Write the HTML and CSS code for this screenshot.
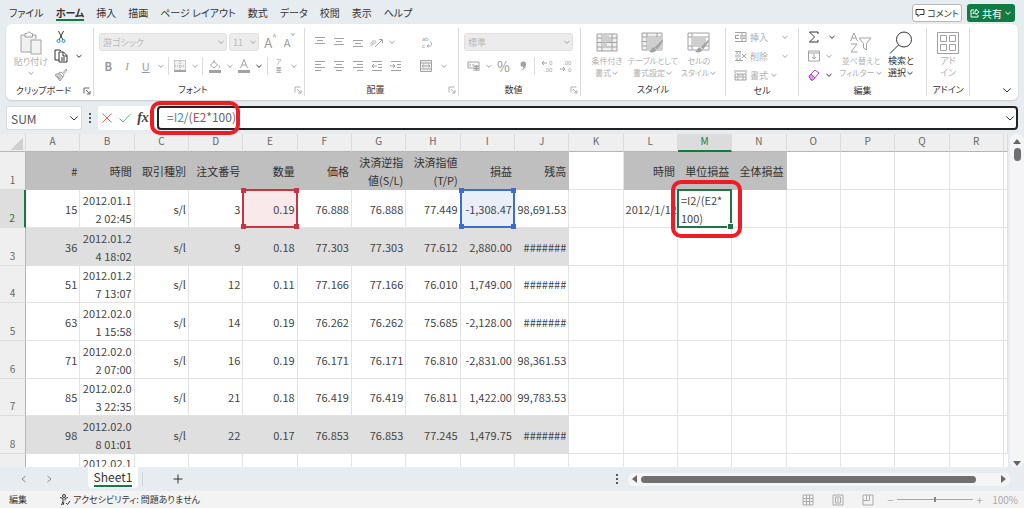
FILE: index.html
```html
<!DOCTYPE html>
<html lang="ja">
<head>
    <meta charset="UTF-8">
    <meta name="viewport" content="width=device-width, initial-scale=1.0">
    <title>Sheet1</title>
    <link rel="stylesheet" href="styles.css">
</head>
<body>
    <!-- 共通アイコン -->
    <svg class="defs" width="0" height="0" aria-hidden="true">
        <symbol id="chev" viewBox="0 0 8 8"><path vector-effect="non-scaling-stroke" d="M1.5 3l2.5 2.3L6.500 3"/></symbol>
        <symbol id="launcher" viewBox="0 0 8 8"><path d="M1 6.500V1h5.500M3 3l4 4M7 4v3H4"/></symbol>
        <symbol id="grid-icon" viewBox="0 0 22 20"><path class="pale" d="M1 1h20v17H1z"/><path d="M1 1h20v17H1zM1 5h20M1 9.500h20M1 14h20M6 1v17M16 1v17"/></symbol>
        <symbol id="brush" viewBox="0 0 14 14"><path class="solid" d="M13 1L6 8l2 2 5-7zM5 8c-2 0-2 3-4 4 2 1 6 1 6-2z"/></symbol>
    </svg>

    <header class="tabs">
        <nav class="tab-list">
            <a href="#">ファイル</a>
            <a href="#" class="active">ホーム</a>
            <a href="#">挿入</a>
            <a href="#">描画</a>
            <a href="#">ページ レイアウト</a>
            <a href="#">数式</a>
            <a href="#">データ</a>
            <a href="#">校閲</a>
            <a href="#">表示</a>
            <a href="#">ヘルプ</a>
        </nav>
        <div class="tab-actions">
            <button class="comment-btn"><svg width="10" height="10" viewBox="0 0 10 10"><path d="M1 1.500h8v5H5L3 8.500v-2H1z"/></svg>コメント</button>
            <button class="share-btn"><svg width="10" height="10" viewBox="0 0 10 10"><path d="M4 2H1v7h7V7M3 6c0-2 1-3 3-3V1l3 3-3 2.500V5C5 5 4 5 3 6z"/></svg>共有<svg width="8" height="8"><use href="#chev"/></svg></button>
        </div>
    </header>

    <section class="ribbon">
        <div class="group g-clip">
            <div class="group-body">
                <button class="big-btn off">
                    <svg width="24" height="24" viewBox="0 0 24 24"><path class="pale" d="M2 4h15v17H2z"/><path d="M6 4H2v17h10M13 4h4v4M6 2.500h2c0-2 4-2 4 0h1.500V6H6z"/><path class="paper" d="M12 9h10v14H12z"/></svg>
                    <span>貼り付け</span>
                    <svg width="8" height="8"><use href="#chev"/></svg>
                </button>
                <div class="stack">
                    <div class="line"><button class="icon-btn" aria-label="切り取り"><svg width="12" height="14" viewBox="0 0 12 14"><path d="M3.500 1L8 10M8.500 1L4 10"/><circle class="blue" cx="3.500" cy="11" r="1.500"/><circle class="blue" cx="8.500" cy="11" r="1.500"/></svg></button></div>
                    <div class="line"><button class="icon-btn" aria-label="コピー"><svg width="14" height="14" viewBox="0 0 14 14"><path d="M5 11H1V1h5l1 1M5 3h4.500L13 6.500V13H5zM9 3v4h4M7 9h4M7 11h4"/></svg></button><button class="chev-btn wide" aria-label="コピーのオプション"><svg width="8" height="8"><use href="#chev"/></svg></button></div>
                    <div class="line"><button class="icon-btn off" aria-label="書式のコピー"><svg width="14" height="14" viewBox="0 0 14 14"><path class="mid" d="M1 7l4-2 4 4-3 4z"/><path d="M5 5l2-1 3 3-1 2M8.500 5.500L12 1l1 1-3.500 4.500M1 7l4-2 4 4-3 4zM3 8l3 3"/></svg></button></div>
                </div>
            </div>
            <div class="group-label">クリップボード<svg width="8" height="8"><use href="#launcher"/></svg></div>
        </div>

        <div class="group g-font off">
            <div class="group-body rows">
                <div class="line">
                    <div class="combo combo-font"><select aria-label="フォント"><option>游ゴシック</option></select><svg width="8" height="8"><use href="#chev"/></svg></div>
                    <div class="combo combo-size"><select aria-label="フォント サイズ"><option>11</option></select><svg width="8" height="8"><use href="#chev"/></svg></div>
                    <button class="icon-btn letter-big">A<sup>^</sup></button>
                    <button class="icon-btn letter">A<sup>ˇ</sup></button>
                </div>
                <div class="line">
                    <button class="icon-btn letter"><b>B</b></button>
                    <button class="icon-btn letter serif"><i>I</i></button>
                    <button class="icon-btn letter"><u>U</u></button>
                    <button class="chev-btn" aria-label="下線"><svg width="8" height="8"><use href="#chev"/></svg></button>
                    <span class="sep"></span>
                    <button class="icon-btn" aria-label="罫線"><svg width="12" height="12" viewBox="0 0 12 12"><path class="pale" d="M0 0h12v11H0z"/><path class="dash" d="M.5.5h11v10M.5.5v10M6 1v10M1 6h10"/><path class="strong" d="M0 11h12"/></svg></button>
                    <button class="chev-btn" aria-label="罫線の種類"><svg width="8" height="8"><use href="#chev"/></svg></button>
                    <span class="sep"></span>
                    <button class="icon-btn" aria-label="塗りつぶしの色"><svg width="14" height="14" viewBox="0 0 14 14"><path d="M6 1v3M2.500 6L6 2.500 9.500 6 6 9zM10.500 6c2 2 1 3 0 3"/><path class="solid" d="M1 11h12v3H1z"/></svg></button>
                    <button class="chev-btn" aria-label="塗りつぶし"><svg width="8" height="8"><use href="#chev"/></svg></button>
                    <button class="icon-btn" aria-label="フォントの色"><svg width="14" height="14" viewBox="0 0 14 14"><path d="M3.500 9L7 .5 10.500 9M5 6h4"/><path class="solid" d="M1 11h12v3H1z"/></svg></button>
                    <button class="chev-btn on" aria-label="フォントの色の選択"><svg width="8" height="8"><use href="#chev"/></svg></button>
                    <span class="sep"></span>
                    <button class="icon-btn ruby"><span>ア</span><span>亜</span></button>
                    <button class="chev-btn" aria-label="ふりがな"><svg width="8" height="8"><use href="#chev"/></svg></button>
                </div>
            </div>
            <div class="group-label">フォント<svg width="8" height="8"><use href="#launcher"/></svg></div>
        </div>

        <div class="group g-align off">
            <div class="group-body">
                <div class="rows">
                    <div class="line">
                        <button class="icon-btn" aria-label="上揃え"><svg width="12" height="12" viewBox="0 0 12 12"><path d="M1 1.500h10M3 4.500h6M1 7.500h10"/></svg></button>
                        <button class="icon-btn" aria-label="上下中央揃え"><svg width="12" height="12" viewBox="0 0 12 12"><path d="M1 2.500h10M3 5.500h6M1 8.500h10"/></svg></button>
                        <button class="icon-btn" aria-label="下揃え"><svg width="12" height="12" viewBox="0 0 12 12"><path d="M1 4.500h10M3 7.500h6M1 10.500h10"/></svg></button>
                        <button class="icon-btn" aria-label="方向"><svg width="14" height="12" viewBox="0 0 14 12"><text x="0" y="8" transform="rotate(-40 4 7)">ab</text><path d="M5 11l7-7M9 3.500h3.500V7"/></svg></button>
                        <button class="chev-btn" aria-label="方向の選択"><svg width="8" height="8"><use href="#chev"/></svg></button>
                    </div>
                    <div class="line">
                        <button class="icon-btn" aria-label="左揃え"><svg width="12" height="12" viewBox="0 0 12 12"><path d="M1 1.500h10M1 4.500h6M1 7.500h10M1 10.500h6"/></svg></button>
                        <button class="icon-btn" aria-label="中央揃え"><svg width="12" height="12" viewBox="0 0 12 12"><path d="M1 1.500h10M3 4.500h6M1 7.500h10M3 10.500h6"/></svg></button>
                        <button class="icon-btn" aria-label="右揃え"><svg width="12" height="12" viewBox="0 0 12 12"><path d="M1 1.500h10M5 4.500h6M1 7.500h10M5 10.500h6"/></svg></button>
                        <button class="icon-btn" aria-label="インデントを減らす"><svg width="12" height="12" viewBox="0 0 12 12"><path d="M1 1.500h10M7 4.500h4M7 7.500h4M1 10.500h10M1 6h5M3 4L1 6l2 2"/></svg></button>
                        <button class="icon-btn" aria-label="インデントを増やす"><svg width="12" height="12" viewBox="0 0 12 12"><path d="M1 1.500h10M7 4.500h4M7 7.500h4M1 10.500h10M0 6h5M3 4l2 2-2 2"/></svg></button>
                    </div>
                </div>
                <span class="sep tall"></span>
                <div class="rows">
                    <div class="line"><button class="icon-btn wrap" aria-label="折り返して全体を表示する"><svg width="14" height="14" viewBox="0 0 14 14"><text x="3" y="6">ab</text><text x="3" y="13">c</text><path d="M11 7c2 0 2 4 0 4H8M9.500 9.500L8 11l1.500 1.500"/></svg></button></div>
                    <div class="line"><button class="icon-btn" aria-label="セルを結合"><svg width="12" height="12" viewBox="0 0 12 12"><path class="pale" d="M.5.5h11v11H.5z"/><path d="M.5.5h11v11H.5zM1 3h10M1 9h10M2 6h8M3.500 4.500L2 6l1.500 1.500M8.500 4.500L10 6 8.500 7.500"/></svg></button><button class="chev-btn wide" aria-label="結合の選択"><svg width="8" height="8"><use href="#chev"/></svg></button></div>
                </div>
            </div>
            <div class="group-label">配置<svg width="8" height="8"><use href="#launcher"/></svg></div>
        </div>

        <div class="group g-num off">
            <div class="group-body rows">
                <div class="line">
                    <div class="combo combo-num"><select aria-label="数値の書式"><option>標準</option></select><svg width="8" height="8"><use href="#chev"/></svg></div>
                </div>
                <div class="line">
                    <button class="icon-btn" aria-label="通貨"><svg width="14" height="12" viewBox="0 0 14 12"><path d="M6 8H1V2h11v3M3 3.500v3M5 5h2"/><path class="mid" d="M6 5h7v6H6z"/><path d="M7 6.500h5M7 8.500h5M9.500 5v6"/></svg></button>
                    <button class="chev-btn" aria-label="通貨の選択"><svg width="8" height="8"><use href="#chev"/></svg></button>
                    <button class="icon-btn percent">%</button>
                    <button class="icon-btn comma" aria-label="桁区切り"><svg width="8" height="12" viewBox="0 0 8 12"><path class="solid" d="M4 1.500c3 0 3 2 3 3 0 3-2 5-4 6l-.5-.5c1.500-1 2-2 2-3C2 7 1.500 5.500 1.500 4S3 1.500 4 1.500z"/></svg></button>
                    <span class="sep"></span>
                    <button class="icon-btn" aria-label="小数点以下の表示桁数を増やす"><svg width="14" height="14" viewBox="0 0 14 14"><text x="9" y="6">0</text><text x="4" y="13">.00</text><path d="M2 4h5M4 2L2 4l2 2"/></svg></button>
                    <button class="icon-btn" aria-label="小数点以下の表示桁数を減らす"><svg width="14" height="14" viewBox="0 0 14 14"><text x="4" y="6">.00</text><text x="9" y="13">0</text><path d="M1 10h5M4 8l2 2-2 2"/></svg></button>
                </div>
            </div>
            <div class="group-label">数値<svg width="8" height="8"><use href="#launcher"/></svg></div>
        </div>

        <div class="group g-style off">
            <div class="group-body">
                <button class="big-btn">
                    <svg width="22" height="20" viewBox="0 0 22 20"><use href="#grid-icon" width="22" height="20"/><path class="mid" d="M6 1h7v4H6zM6 9.500h5V14H6zM6 5h9v4H6z"/></svg>
                    <span>条件付き</span><span>書式<svg width="8" height="8"><use href="#chev"/></svg></span>
                </button>
                <button class="big-btn">
                    <svg width="24" height="22" viewBox="0 0 24 22"><use href="#grid-icon" width="22" height="20"/><path class="mid" d="M6 5h15v13H6z"/><use href="#brush" x="7" y="6" width="16" height="16"/></svg>
                    <span>テーブルとして</span><span>書式設定<svg width="8" height="8"><use href="#chev"/></svg></span>
                </button>
                <button class="big-btn">
                    <svg width="24" height="22" viewBox="0 0 24 22"><path d="M1 1h21v17H1zM1 5h21M5 1v17M1 14h21"/><path class="mid" d="M5 5h14v9H5z"/><use href="#brush" x="7" y="6" width="16" height="16"/></svg>
                    <span>セルの</span><span>スタイル<svg width="8" height="8"><use href="#chev"/></svg></span>
                </button>
            </div>
            <div class="group-label">スタイル</div>
        </div>

        <div class="group g-cell off">
            <div class="group-body stack">
                <button class="row-btn"><svg width="14" height="12" viewBox="0 0 14 12"><path d="M1 1.500h11v9H1M1 4.500h4M1 7.500h4M8 1v9M12 4.500H6M12 7.500H6M3 4L1 6l2 2"/><path class="mid" d="M6 4.500h6v3H6z"/></svg><span>挿入</span><svg class="end" width="8" height="8"><use href="#chev"/></svg></button>
                <button class="row-btn"><svg width="14" height="12" viewBox="0 0 14 12"><path d="M1 1.500h6M1 10.500h8M3 1v3M6 1v3M3 8v3M6 8v3M8 4l4 4M12 4L8 8"/><path class="mid" d="M1 4.500h6v3H1z"/></svg><span>削除</span><svg class="end" width="8" height="8"><use href="#chev"/></svg></button>
                <button class="row-btn"><svg width="14" height="12" viewBox="0 0 14 12"><path d="M1 1v3M12 1v3M2 2h9M1 5h11v6H1zM4 5v6M9 5v6M1 8h11"/><path class="mid" d="M4 6h5v3H4z"/></svg><span>書式</span><svg width="8" height="8"><use href="#chev"/></svg></button>
            </div>
            <div class="group-label">セル</div>
        </div>

        <div class="group g-edit">
            <div class="group-body">
                <div class="stack">
                    <div class="line"><button class="icon-btn" aria-label="合計"><svg width="12" height="12" viewBox="0 0 12 12"><path d="M10 3V1H1.500l5 5-5 5H10V9"/></svg></button><button class="chev-btn wide" aria-label="合計の選択"><svg width="8" height="8"><use href="#chev"/></svg></button></div>
                    <div class="line off"><button class="icon-btn" aria-label="フィル"><svg width="12" height="12" viewBox="0 0 12 12"><path d="M.5 1h11v10H.5zM1 3h10M6 4v5M4 7l2 2 2-2"/></svg></button><button class="chev-btn" aria-label="フィルの選択"><svg width="8" height="8"><use href="#chev"/></svg></button></div>
                    <div class="line"><button class="icon-btn" aria-label="クリア"><svg width="12" height="12" viewBox="0 0 12 12"><path class="purple" d="M1 7l6-6 4 3-6 7H3z"/><path class="purple-fill" d="M1 7l2-2 4 4-2 2H3z"/></svg></button><button class="chev-btn" aria-label="クリアの選択"><svg width="8" height="8"><use href="#chev"/></svg></button></div>
                </div>
                <button class="big-btn off">
                    <svg width="24" height="22" viewBox="0 0 24 22"><path d="M1.500 9L5 1l3.500 8M3 6h4M2 12h6l-6 8h6.500M10 6h12l-4.500 5.500V18l-3-2v-4.500z"/></svg>
                    <span>並べ替えと</span><span>フィルター<svg width="8" height="8"><use href="#chev"/></svg></span>
                </button>
                <button class="big-btn find-btn">
                    <svg width="24" height="24" viewBox="0 0 24 24"><circle cx="15" cy="8.500" r="7.500"/><path d="M9.500 14L1 22.500"/></svg>
                    <span>検索と</span><span>選択<svg width="8" height="8"><use href="#chev"/></svg></span>
                </button>
            </div>
            <div class="group-label">編集</div>
        </div>

        <div class="group g-addin">
            <div class="group-body">
                <button class="big-btn off">
                    <svg width="22" height="22" viewBox="0 0 22 22"><path d="M.5.5h21v21H.5zM3.500 3.500h6v6h-6zM12.500 3.500h6v6h-6zM3.500 12.500h6v6h-6zM12.500 12.500h6v6h-6z"/></svg>
                    <span>アド</span><span>イン</span>
                </button>
            </div>
            <div class="group-label">アドイン</div>
        </div>
        <button class="collapse-btn" aria-label="リボンを折りたたむ"><svg width="12" height="12"><use href="#chev"/></svg></button>
    </section>

    <section class="formula-bar">
        <div class="name-box">
            <input type="text" value="SUM" aria-label="名前ボックス">
            <svg width="12" height="12"><use href="#chev"/></svg>
        </div>
        <span class="dots"></span>
        <div class="formula-tools">
            <button aria-label="キャンセル"><svg width="12" height="12" viewBox="0 0 12 12"><path class="red" d="M1.500 1.500l9 9M10.500 1.500l-9 9"/></svg></button>
            <button aria-label="入力"><svg width="14" height="12" viewBox="0 0 14 12"><path class="green" d="M1.500 6.500L5 10l7.500-8"/></svg></button>
            <button class="fx">fx</button>
        </div>
        <div class="formula-wrap">
            <div class="formula" contenteditable="true" role="textbox" aria-label="数式バー" spellcheck="false">=<span class="ref-blue">I2</span>/(<span class="ref-red">E2</span>*100)</div>
            <svg class="expand" width="12" height="12"><use href="#chev"/></svg>
            <span class="mark mark-formula"></span>
        </div>
    </section>

    <main class="sheet">
        <div class="grid-wrap">
            <table class="grid">
                <colgroup><col class="col-head"><col span="18"><col class="col-rest"></colgroup>
                <thead>
                    <tr><th class="corner"></th><th>A</th><th>B</th><th>C</th><th>D</th><th>E</th><th>F</th><th>G</th><th>H</th><th>I</th><th>J</th><th>K</th><th>L</th><th class="current">M</th><th>N</th><th>O</th><th>P</th><th>Q</th><th>R</th><th></th></tr>
                </thead>
                <tbody>
                    <tr class="titles"><th>1</th><td>#</td><td>時間</td><td>取引種別</td><td>注文番号</td><td>数量</td><td>価格</td><td>決済逆指<br>値(S/L)</td><td>決済指値<br>(T/P)</td><td>損益</td><td>残高</td><td></td><td>時間</td><td>単位損益</td><td>全体損益</td><td></td><td></td><td></td><td></td><td></td></tr>
                    <tr><th class="current">2</th><td>15</td><td>2012.01.12 02:45</td><td>s/l</td><td>3</td><td class="pick pick-red">0.19<i></i><i></i><i></i><i></i></td><td>76.888</td><td>76.888</td><td>77.449</td><td class="pick pick-blue">-1,308.47<i></i><i></i><i></i><i></i></td><td>98,691.53</td><td></td><td class="date">2012/1/12</td><td class="editing">=I2/(E2*<br>100)<span class="mark mark-cell"></span></td><td></td><td></td><td></td><td></td><td></td><td></td></tr>
                    <tr class="band"><th>3</th><td>36</td><td>2012.01.24 18:02</td><td>s/l</td><td>9</td><td>0.18</td><td>77.303</td><td>77.303</td><td>77.612</td><td>2,880.00</td><td>#######</td><td></td><td></td><td></td><td></td><td></td><td></td><td></td><td></td><td></td></tr>
                    <tr><th>4</th><td>51</td><td>2012.01.27 13:07</td><td>s/l</td><td>12</td><td>0.11</td><td>77.166</td><td>77.166</td><td>76.010</td><td>1,749.00</td><td>#######</td><td></td><td></td><td></td><td></td><td></td><td></td><td></td><td></td><td></td></tr>
                    <tr><th>5</th><td>63</td><td>2012.02.01 15:58</td><td>s/l</td><td>14</td><td>0.19</td><td>76.262</td><td>76.262</td><td>75.685</td><td>-2,128.00</td><td>#######</td><td></td><td></td><td></td><td></td><td></td><td></td><td></td><td></td><td></td></tr>
                    <tr><th>6</th><td>71</td><td>2012.02.02 07:00</td><td>s/l</td><td>16</td><td>0.19</td><td>76.171</td><td>76.171</td><td>76.810</td><td>-2,831.00</td><td>98,361.53</td><td></td><td></td><td></td><td></td><td></td><td></td><td></td><td></td><td></td></tr>
                    <tr><th>7</th><td>85</td><td>2012.02.03 22:35</td><td>s/l</td><td>21</td><td>0.18</td><td>76.419</td><td>76.419</td><td>76.811</td><td>1,422.00</td><td>99,783.53</td><td></td><td></td><td></td><td></td><td></td><td></td><td></td><td></td><td></td></tr>
                    <tr class="band"><th>8</th><td>98</td><td>2012.02.08 01:01</td><td>s/l</td><td>22</td><td>0.17</td><td>76.853</td><td>76.853</td><td>77.245</td><td>1,479.75</td><td>#######</td><td></td><td></td><td></td><td></td><td></td><td></td><td></td><td></td><td></td></tr>
                    <tr><th></th><td></td><td>2012.02.1</td><td></td><td></td><td></td><td></td><td></td><td></td><td></td><td></td><td></td><td></td><td></td><td></td><td></td><td></td><td></td><td></td></tr>
                </tbody>
            </table>
        </div>
        <div class="v-scroll">
            <span class="arrow up"></span>
            <span class="v-thumb"></span>
            <span class="arrow down"></span>
        </div>
    </main>

    <footer>
        <div class="sheet-bar">
            <div class="sheet-nav">
                <button aria-label="前のシート"><svg width="8" height="8" viewBox="0 0 8 8"><path d="M5.500 1L2 4l3.500 3"/></svg></button>
                <button aria-label="次のシート"><svg width="8" height="8" viewBox="0 0 8 8"><path d="M2.500 1L6 4 2.500 7"/></svg></button>
            </div>
            <button class="sheet-tab"><span>Sheet1</span></button>
            <span class="tab-sep"></span>
            <button class="add-sheet" aria-label="新しいシート"><svg width="10" height="10" viewBox="0 0 10 10"><path d="M5 .5v9M.5 5h9"/></svg></button>
            <div class="h-area">
                <span class="dots"></span>
                <div class="h-scroll">
                    <span class="arrow left"></span>
                    <span class="h-track"><span class="h-thumb"></span></span>
                    <span class="arrow right"></span>
                </div>
            </div>
        </div>
        <div class="status">
            <span class="mode">編集</span>
            <span class="access"><svg width="12" height="12" viewBox="0 0 12 12"><circle cx="5" cy="2" r="1.500"/><path d="M1 3.500l3 1v3L2.500 11M9 3.500l-3 1v2M5 8l-1 3M7 9l1.500 1.500L11 7"/></svg>アクセシビリティ: 問題ありません</span>
            <div class="views">
                <button aria-label="標準"><svg width="12" height="12" viewBox="0 0 12 12"><path d="M1 1h10v10H1zM1 4.500h10M1 7.500h10M4.500 1v10M7.500 1v10"/></svg></button>
                <button aria-label="ページ レイアウト"><svg width="12" height="12" viewBox="0 0 12 12"><path d="M1 1h10v10H1zM3.500 3h5v6h-5zM5 5h2M5 7h2"/></svg></button>
                <button aria-label="改ページ プレビュー"><svg width="12" height="12" viewBox="0 0 12 12"><path d="M1 1h10v10H1zM1 6.500h6.500V1M4.500 1v5"/></svg></button>
            </div>
            <div class="zoom">
                <button aria-label="縮小">−</button>
                <input type="range" min="0" max="200" value="100" aria-label="ズーム">
                <button aria-label="拡大">+</button>
                <span class="percent-text">100%</span>
            </div>
        </div>
    </footer>
</body>
</html>
```
FILE: styles.css
```css
* {
    box-sizing: border-box;
}
body {
    margin: 0;
    height: 100vh;
    display: flex;
    flex-direction: column;
    overflow: hidden;
    background: #e7ecf0;
    color: #333;
    font-family: "Noto Sans CJK JP", sans-serif;
    font-size: 10px;
    font-feature-settings: "palt";
}
button {
    display: flex;
    align-items: center;
    justify-content: center;
    padding: 0;
    border: none;
    background: none;
    color: inherit;
    font: inherit;
    font-feature-settings: inherit;
}
svg {
    flex: none;
    overflow: visible;
    fill: none;
    stroke: currentColor;
}
svg text {
    fill: currentColor;
    stroke: none;
    font-family: "Liberation Sans", sans-serif;
    font-size: 6px;
}
.defs {
    position: absolute;
}
.pale { fill: #f0f0f0; stroke: none; }
.mid { fill: #cfcfcf; stroke: none; }
.solid { fill: currentColor; stroke: none; }
.paper { fill: #f3f3f3; }
.strong { stroke-width: 2; }
.dash { stroke-dasharray: 1 1; }
.blue { stroke: #2f8fd0; }
.red { stroke: #e8665c; }
.green { stroke: #5cb874; }
.purple { stroke: #b146c2; }
.purple-fill { fill: #d9a0e2; stroke: #b146c2; }
.off {
    color: #b0b0b0;
}
.off svg {
    color: #a2a2a2;
}
.off .on svg {
    color: #333;
}

/* タブ */
.tabs {
    display: flex;
    justify-content: space-between;
    height: 24px;
    padding: 0 9px;
}
.tab-list {
    display: flex;
    gap: 12px;
    padding-top: 5px;
}
.tab-list a {
    height: 16px;
    line-height: 16px;
    color: #333;
    text-decoration: none;
    white-space: nowrap;
}
.tab-list .active {
    font-weight: bold;
    border-bottom: 2px solid #107c41;
}
.tab-actions {
    display: flex;
    gap: 5px;
    padding-top: 4px;
}
.tab-actions button {
    height: 18px;
    gap: 2px;
    border-radius: 3px;
}
.comment-btn {
    width: 50px;
    background: #fff;
    border: 1px solid #b8b8b8;
    font-size: 9px;
}
.share-btn {
    width: 48px;
    background: #107c41;
    color: #fff;
}

/* リボン */
.ribbon {
    display: flex;
    height: 76px;
    margin: 0 6px;
    padding: 4px 0;
    background: #fff;
    border-radius: 6px;
    box-shadow: 0 1px 2px #c8ccd0;
    font-size: 9px;
}
.group {
    display: flex;
    flex-direction: column;
    flex: none;
    border-right: 1px solid #dadada;
}
.g-clip { width: 88px; }
.g-font { width: 211px; }
.g-align { width: 154px; }
.g-num { width: 122px; }
.g-style { width: 145px; }
.g-cell { width: 73px; }
.g-edit { width: 128px; }
.g-addin { width: 43px; }
.group-body {
    flex: 1;
    display: flex;
    padding: 0 5px;
}
.group-label {
    position: relative;
    height: 13px;
    line-height: 13px;
    text-align: center;
    color: #333;
}
.g-clip .group-label,
.g-font .group-label,
.g-align .group-label,
.g-num .group-label {
    padding-right: 12px;
}
.group-label svg {
    position: absolute;
    right: 2px;
    top: 3px;
    color: #666;
}
.off .group-label svg {
    color: #b0b0b0;
}
.rows {
    display: flex;
    flex-direction: column;
    padding-top: 4px;
    gap: 4px;
}
.group-body.rows {
    padding-top: 4px;
}
.line {
    display: flex;
    align-items: center;
}
.rows .line {
    height: 20px;
}
.stack {
    display: flex;
    flex-direction: column;
    gap: 1px;
}
.stack .line,
.row-btn {
    height: 18px;
}
.icon-btn {
    width: 19px;
    height: 18px;
}
.chev-btn {
    width: 11px;
    height: 18px;
}
.chev-btn.wide {
    width: 18px;
}
.big-btn {
    flex-direction: column;
    justify-content: flex-start;
    padding-top: 3px;
    line-height: 12px;
    white-space: nowrap;
}
.big-btn > svg:first-child {
    height: 24px;
}
.big-btn span {
    display: flex;
    align-items: center;
}
.g-clip .big-btn {
    width: 42px;
}
.g-clip .big-btn span {
    line-height: 14px;
}
.g-style .group-body {
    justify-content: space-between;
}
.g-style .big-btn,
.g-edit .off.big-btn {
    font-size: 8px;
}
.g-style .big-btn {
    width: 42px;
}
.g-edit .stack {
    flex: 1;
}
.g-edit .big-btn {
    width: 40px;
}
.g-addin .big-btn {
    width: 100%;
}
.sep {
    width: 1px;
    height: 18px;
    margin: 0 2px;
    background: #dadada;
}
.sep.tall {
    height: 46px;
    margin: 4px 5px 0 6px;
}
.letter {
    font-size: 11px;
}
.letter-big {
    font-size: 13px;
}
.icon-btn sup {
    font-size: 8px;
    line-height: 8px;
    align-self: flex-start;
}
.serif {
    font-family: "Liberation Serif", serif;
}
.percent {
    font-size: 14px;
}
.g-font .icon-btn,
.g-align .icon-btn,
.g-num .icon-btn {
    color: #999;
}
.ruby {
    flex-direction: column;
    font-size: 6px;
    line-height: 8px;
}
.combo {
    position: relative;
    height: 18px;
    margin-right: 2px;
}
.combo select {
    width: 100%;
    height: 18px;
    padding: 0 3px;
    appearance: none;
    background: #ececec;
    border: 1px solid #e0e0e0;
    border-radius: 3px;
    color: #b8b8b8;
    font: inherit;
    font-feature-settings: inherit;
}
.combo svg {
    position: absolute;
    right: 2px;
    top: 5px;
}
.combo-font { width: 128px; }
.combo-size { width: 30px; }
.combo-num { width: 111px; }
.row-btn {
    gap: 2px;
    justify-content: flex-start;
    padding-left: 3px;
}
.row-btn .end {
    margin-left: auto;
    margin-right: 4px;
}
.collapse-btn {
    margin-left: auto;
    padding-right: 5px;
    align-self: flex-end;
}

/* 数式バー */
.formula-bar {
    display: flex;
    height: 24px;
    margin: 6px 6px 4px;
}
.name-box {
    position: relative;
    width: 76px;
}
.name-box input {
    width: 100%;
    height: 24px;
    padding: 0 4px;
    border: 1px solid #d8dcdf;
    border-radius: 3px;
    color: #555;
    font: inherit;
    font-size: 12px;
}
.name-box svg {
    position: absolute;
    right: 2px;
    top: 6px;
}
.dots {
    width: 2px;
    height: 10px;
    margin: 7px 7px;
    background: repeating-linear-gradient(#555 0 2px, transparent 2px 4px);
}
.formula-tools {
    display: flex;
    width: 59px;
    background: #fff;
    border-radius: 3px 0 0 3px;
}
.formula-tools button {
    width: 18px;
}
.formula-tools .fx {
    font: italic bold 14px "Liberation Serif", serif;
    color: #444;
}
.formula-wrap {
    position: relative;
    flex: 1;
}
.formula {
    height: 24px;
    padding-left: 8px;
    background: #fff;
    border: 2px solid #222;
    border-radius: 4px;
    color: #666;
    font-size: 12px;
    line-height: 18px;
    outline: none;
}
.ref-blue { color: #3a8fd0; }
.ref-red { color: #c8464f; }
.expand {
    position: absolute;
    right: 2px;
    top: 6px;
}
.mark {
    position: absolute;
    z-index: 5;
    border: 4px solid #ee1c25;
    border-radius: 10px;
    pointer-events: none;
}
.mark-formula {
    left: -7px;
    top: -5px;
    width: 90px;
    height: 34px;
}
.mark-cell {
    inset: -10px -11px -11px -7px;
}

/* シート */
.sheet {
    display: flex;
    flex: 1;
    min-height: 0;
}
.grid-wrap {
    flex: 1;
    overflow: hidden;
    background: #fff;
}
.grid {
    width: 100%;
    table-layout: fixed;
    border-collapse: separate;
    border-spacing: 0;
    color: #444;
    font-size: 11px;
    font-feature-settings: normal;
    line-height: 18px;
}
.col-head { width: 26px; }
.col-rest { width: 4px; }
.grid th {
    padding: 0;
    background: #efefef;
    color: #666;
    font-size: 10px;
    font-weight: normal;
}
.grid thead th {
    height: 18px;
    line-height: 14px;
    vertical-align: top;
    border-right: 1px solid #dcdcdc;
    border-bottom: 1px solid #b5b5b5;
}
.grid thead .current {
    background: #dcdcdc;
    border-bottom: 2px solid #107c41;
    color: #107c41;
}
.grid .corner {
    background: linear-gradient(135deg, transparent 50%, #d0d0d0 50%) 11px 4px / 12px 12px no-repeat #efefef;
}
.grid tbody tr {
    height: 38px;
}
.grid tbody tr:nth-child(3n+4) {
    height: 37px;
}
.grid tbody th {
    vertical-align: bottom;
    border-right: 1px solid #b5b5b5;
    border-bottom: 1px solid #dcdcdc;
}
.grid tbody .current {
    background: #dedede;
    border-right: 2px solid #107c41;
    color: #107c41;
}
.grid td {
    padding: 0 2px 0 1px;
    border-right: 1px solid #e2e2e2;
    border-bottom: 1px solid #e2e2e2;
    text-align: right;
    word-break: break-all;
}
.grid tr:last-child td {
    vertical-align: top;
}
.band td:nth-child(-n+11) {
    background: #dfdfdf;
    border-color: #dfdfdf;
}
.titles td:nth-child(-n+11),
.titles td:nth-child(n+13):nth-child(-n+15) {
    background: #bfbfbf;
    border-color: #bfbfbf;
    color: #333;
}
.grid .date {
    white-space: nowrap;
    padding: 0;
}
.pick {
    position: relative;
}
.pick::before {
    content: "";
    position: absolute;
    inset: -1px;
    border: 2px solid;
}
.pick-red::before {
    border-color: #c8343f;
}
.pick-blue::before {
    border-color: #3a6fc9;
}
.pick-red { background: #f9e9ea; }
.pick-blue { background: #e9eff9; }
.pick i {
    position: absolute;
    width: 5px;
    height: 5px;
}
.pick-red i { background: #c8343f; }
.pick-blue i { background: #3a6fc9; }
.pick i:nth-of-type(odd) { left: -2px; }
.pick i:nth-of-type(even) { right: -2px; }
.pick i:nth-of-type(-n+2) { top: -2px; }
.pick i:nth-of-type(n+3) { bottom: -2px; }
.grid .editing {
    position: relative;
    padding-left: 3px;
    text-align: left;
}
.editing::before {
    content: "";
    position: absolute;
    inset: -1px;
    border: 2px solid #217346;
}
.editing::after {
    content: "";
    position: absolute;
    right: -2px;
    bottom: -2px;
    width: 5px;
    height: 5px;
    border: 1px solid #fff;
    border-width: 1px 0 0 1px;
    background: #217346;
}

/* スクロールバー */
.v-scroll {
    display: flex;
    flex-direction: column;
    align-items: center;
    width: 14px;
    margin-left: 2px;
    padding: 5px 0 1px;
    background: #f5f5f5;
    border-radius: 6px;
}
.v-thumb {
    width: 7px;
    height: 13px;
    margin-top: 4px;
    background: #707070;
    border-radius: 4px;
}
.arrow {
    border: 4px solid transparent;
}
.up {
    border-top: none;
    border-bottom: 5px solid #666;
}
.down {
    margin-top: auto;
    border-bottom: none;
    border-top: 5px solid #666;
}
.left {
    border-left: none;
    border-right: 5px solid #666;
}
.right {
    border-right: none;
    border-left: 5px solid #666;
}

/* シート見出し */
.sheet-bar {
    display: flex;
    height: 24px;
}
.sheet-nav {
    display: flex;
    width: 88px;
    padding-left: 11px;
    color: #888;
}
.sheet-nav button {
    width: 25px;
}
.sheet-tab {
    width: 50px;
    height: 21px;
    background: #fff;
    border-radius: 0 0 4px 4px;
    font-size: 12px;
}
.sheet-tab span {
    height: 18px;
    line-height: 15px;
    border-bottom: 2px solid #107c41;
}
.tab-sep {
    width: 1px;
    height: 14px;
    margin: 5px 0 0 4px;
    background: #d0d4d8;
}
.add-sheet {
    width: 70px;
}
.h-area {
    display: flex;
    align-items: center;
    width: 40%;
    margin-left: auto;
    padding-right: 14px;
}
.h-area .dots {
    margin: 0 10px 0 2px;
}
.h-scroll {
    display: flex;
    align-items: center;
    flex: 1;
    height: 13px;
    padding: 0 4px;
    background: #f5f5f5;
    border-radius: 6px;
}
.h-track {
    flex: 1;
    margin: 0 4px;
}
.h-thumb {
    display: block;
    width: 94%;
    height: 7px;
    background: #707070;
    border-radius: 4px;
}

/* ステータス バー */
.status {
    display: flex;
    align-items: center;
    height: 17px;
    padding: 0 6px 0 9px;
    background: #f3f3f3;
    font-size: 9px;
}
.access {
    display: flex;
    align-items: center;
    gap: 2px;
    margin-left: 32px;
}
.views {
    display: flex;
    gap: 18px;
    margin-left: auto;
    color: #aaa;
}
.zoom {
    display: flex;
    align-items: center;
    gap: 2px;
    margin-left: 12px;
    color: #aaa;
}
.zoom button {
    width: 9px;
    font-size: 11px;
}
.zoom input {
    width: 76px;
    height: 12px;
    margin: 0;
    appearance: none;
    background: linear-gradient(#a8a8a8, #a8a8a8) center / 100% 1px no-repeat;
}
.zoom input::-webkit-slider-thumb {
    appearance: none;
    width: 2px;
    height: 5px;
    background: #888;
}
.percent-text {
    margin-left: 6px;
    font-size: 10px;
}
```
